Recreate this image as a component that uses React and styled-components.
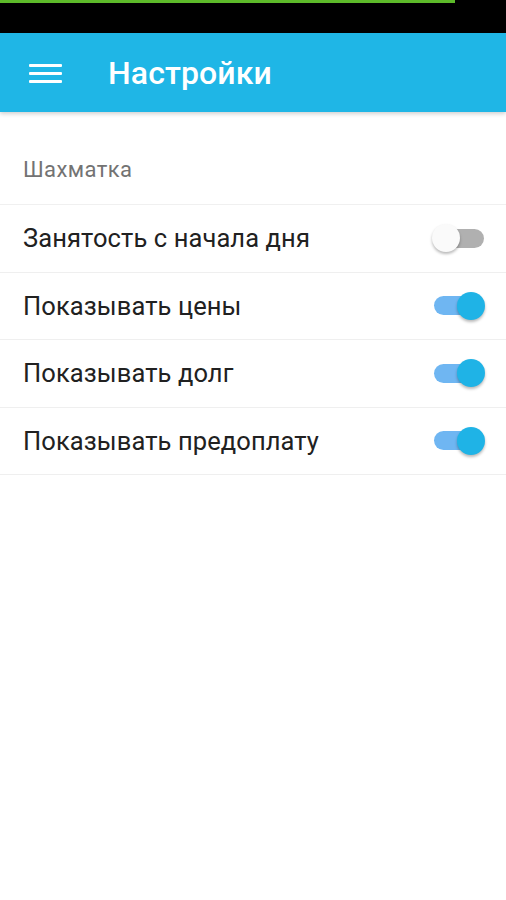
import styled, { createGlobalStyle } from 'styled-components';

const GlobalStyle = createGlobalStyle`
  html, body {
    margin: 0;
    padding: 0;
    background: #ffffff;
  }
  body {
    font-family: Roboto, "Noto Sans", "Liberation Sans", sans-serif;
  }
`;

const Screen = styled.div`
  width: 506px;
  min-height: 900px;
  background: #ffffff;
  display: flex;
  flex-direction: column;
`;

const StatusBar = styled.div`
  height: 33px;
  background: #000000;
  display: flex;
  flex-direction: column;
`;

const Progress = styled.div`
  height: 3px;
  width: 455px;
  background: #5dba2a;
`;

const AppBar = styled.header`
  height: 79px;
  background: #1fb6e6;
  display: flex;
  align-items: center;
  gap: 46px;
  padding-left: 29px;
  box-shadow: 0 2px 4px rgba(0, 0, 0, 0.18);
  position: relative;
  z-index: 1;
`;

const MenuIcon = styled.div`
  width: 33px;
  display: flex;
  flex-direction: column;
  gap: 5px;
  margin-top: 2px;

  span {
    display: block;
    height: 3px;
    border-radius: 1px;
    background: #ffffff;
  }
`;

const Title = styled.h1`
  margin: 0;
  color: #ffffff;
  font-size: 32px;
  font-weight: 500;
  letter-spacing: 0.1px;
`;

const SectionHeader = styled.div`
  height: 93px;
  box-sizing: border-box;
  padding: 45px 23px 0;
  color: #737373;
  font-size: 22px;
  letter-spacing: 0.4px;
  border-bottom: 1px solid #f0f0f0;
`;

const Row = styled.div`
  height: 67.5px;
  box-sizing: border-box;
  display: flex;
  align-items: center;
  justify-content: space-between;
  padding: 0 22px 0 23px;
  border-bottom: 1px solid #efefef;
`;

const Label = styled.span`
  color: #212121;
  font-size: 25.5px;
  letter-spacing: 0.1px;
`;

const Switch = styled.div`
  position: relative;
  width: 50px;
  height: 28px;
  display: flex;
  align-items: center;
`;

const Track = styled.div`
  width: 50px;
  height: 19px;
  border-radius: 10px;
  background: ${p => (p.$on ? '#6fb6f2' : '#b0b0b0')};
`;

const Thumb = styled.div`
  position: absolute;
  top: 0;
  left: ${p => (p.$on ? '23px' : '-2px')};
  width: 28px;
  height: 28px;
  border-radius: 50%;
  background: ${p => (p.$on ? '#1fb3e6' : '#fafafa')};
  box-shadow: 0 2px 3px rgba(0, 0, 0, 0.28);
`;

function Toggle({ on }) {
  return (
    <Switch>
      <Track $on={on} />
      <Thumb $on={on} />
    </Switch>
  );
}

const settings = [
  { label: 'Занятость с начала дня', on: false },
  { label: 'Показывать цены', on: true },
  { label: 'Показывать долг', on: true },
  { label: 'Показывать предоплату', on: true },
];

export default function App() {
  return (
    <>
      <GlobalStyle />
      <Screen>
        <StatusBar>
          <Progress />
        </StatusBar>
        <AppBar>
          <MenuIcon>
            <span />
            <span />
            <span />
          </MenuIcon>
          <Title>Настройки</Title>
        </AppBar>
        <SectionHeader>Шахматка</SectionHeader>
        {settings.map(s => (
          <Row key={s.label}>
            <Label>{s.label}</Label>
            <Toggle on={s.on} />
          </Row>
        ))}
      </Screen>
    </>
  );
}
